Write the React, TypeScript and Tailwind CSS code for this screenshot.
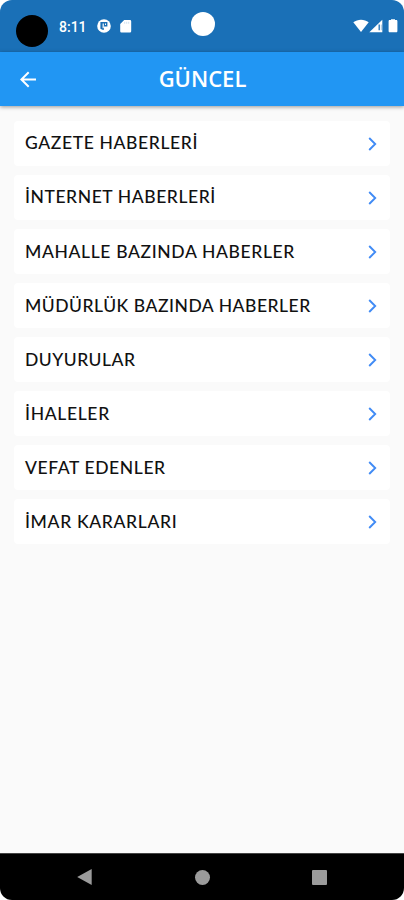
import React from 'react';

const menuItems = [
  { label: 'GAZETE HABERLERİ', spacing: 'tracking-[0.62px]' },
  { label: 'İNTERNET HABERLERİ', spacing: 'tracking-[0.57px]' },
  { label: 'MAHALLE BAZINDA HABERLER', spacing: 'tracking-[0.63px]' },
  { label: 'MÜDÜRLÜK BAZINDA HABERLER', spacing: 'tracking-[0.52px]' },
  { label: 'DUYURULAR', spacing: 'tracking-[0.5px]' },
  { label: 'İHALELER', spacing: 'tracking-[0.66px]' },
  { label: 'VEFAT EDENLER', spacing: 'tracking-[0.6px]' },
  { label: 'İMAR KARARLARI', spacing: 'tracking-[0.65px]' },
];

const StatusBar: React.FC = () => (
  <div className="relative flex h-[52px] shrink-0 items-start bg-[#1a70b7] text-white">
    <div className="ml-4 mt-[15px] size-8 rounded-full bg-black" />
    <span className="ml-[11px] mt-[17px] w-[29px] font-['Roboto',sans-serif] text-[14px] font-medium leading-[20px]">
      8:11
    </span>
    <svg className="ml-[9px] mt-[19px]" width="14" height="14" viewBox="0 0 14 14">
      <circle cx="7" cy="7" r="6.8" fill="white" />
      <path d="M3.4 3h7v4.4H7v3.4H5.4L3.4 9.8z" fill="#1a70b7" />
      <path d="M5.6 4.4h1.2v4.8H5.6zM8 4.4h1v1.6H8z" fill="white" />
    </svg>
    <svg className="ml-[9px] mt-[20px]" width="12" height="13" viewBox="0 0 12 13">
      <path d="M4.2 0H10a1.2 1.2 0 0 1 1.2 1.2v10A1.2 1.2 0 0 1 10 12.4H1.4A1.2 1.2 0 0 1 .2 11.2V4z" fill="white" />
      <path d="M4.7 1.8v2M6.7 1.8v2M8.7 1.8v2" stroke="#1a70b7" strokeOpacity=".25" strokeWidth=".8" />
    </svg>
    <div className="absolute left-[191px] top-[12px] size-6 rounded-full bg-white" />
    <div className="ml-auto mr-[6px] mt-[19px] flex">
      <svg width="16" height="14" viewBox="0 0 16 14">
        <path d="M.3 3.3C4.7-.1 11.3-.1 15.7 3.3L8 13z" fill="white" />
      </svg>
      <svg width="14" height="14" viewBox="0 0 14 14">
        <path d="M13.3.8v12.5H.3z" fill="white" />
        <path d="M10.2 5.6v5.6" stroke="#1a70b7" strokeWidth="1.3" />
        <path d="M12.3 5.6v5.6" stroke="#1a70b7" strokeOpacity=".5" strokeWidth=".8" />
      </svg>
      <svg className="ml-[5px]" width="10" height="14" viewBox="0 0 10 14">
        <path d="M3 .3h4v.7h1.2c.7 0 1.2.5 1.2 1.2V12c0 .7-.5 1.3-1.2 1.3H1.8C1.1 13.3.6 12.7.6 12V2.2C.6 1.5 1.1 1 1.8 1H3z" fill="white" />
      </svg>
    </div>
  </div>
);

const AppBar: React.FC = () => (
  <header className="z-10 grid h-[54px] shrink-0 grid-cols-[56px_1fr_56px] items-center bg-[#2196f3] text-white shadow-[0_1px_4px_rgba(0,0,0,0.4)]">
    <button aria-label="Geri" className="ml-5">
      <svg width="17" height="17" viewBox="0 0 17 17" fill="none" stroke="white" strokeWidth="2">
        <path d="M16 8.5H1.7M8.7 1.2L1.4 8.5l7.3 7.3" />
      </svg>
    </button>
    <h1 className="pb-[3px] pl-px text-center font-['Open_Sans',sans-serif] text-[22px] font-semibold leading-none">
      GÜNCEL
    </h1>
  </header>
);

const MenuRow: React.FC<{ label: string; spacing: string }> = ({ label, spacing }) => (
  <li className="flex h-[45px] items-center justify-between rounded-[4px] bg-white pl-[11px] pr-[13px]">
    <span className={`whitespace-nowrap text-[17.5px] font-medium leading-none text-[#111] ${spacing}`}>{label}</span>
    <svg className="mt-px" width="9" height="14" viewBox="0 0 9 14" fill="none" stroke="#418bf5" strokeWidth="1.9">
      <path d="M1.2 1l6 6-6 6" />
    </svg>
  </li>
);

const App: React.FC = () => (
  <div className="h-[900px] w-[404px] bg-white font-['Lato',sans-serif]">
    <div className="flex h-full flex-col overflow-hidden rounded-[12px] bg-[#fafafa]">
      <StatusBar />
      <AppBar />
      <main className="flex-1 px-[14px] pt-[14.5px]">
        <ul className="flex flex-col gap-[9.15px]">
          {menuItems.map((item) => (
            <MenuRow key={item.label} label={item.label} spacing={item.spacing} />
          ))}
        </ul>
      </main>
      <nav className="flex h-[47px] shrink-0 items-center justify-between border-t border-[#444] bg-black pl-[77px] pr-[77px]">
        <svg width="15" height="16" viewBox="0 0 15 16">
          <path d="M14.7 0v16L.2 8z" fill="#9b9b9b" />
        </svg>
        <div className="size-[15px] rounded-full bg-[#9b9b9b]" />
        <div className="size-[15px] rounded-[1px] bg-[#9b9b9b]" />
      </nav>
    </div>
  </div>
);

export default App;
